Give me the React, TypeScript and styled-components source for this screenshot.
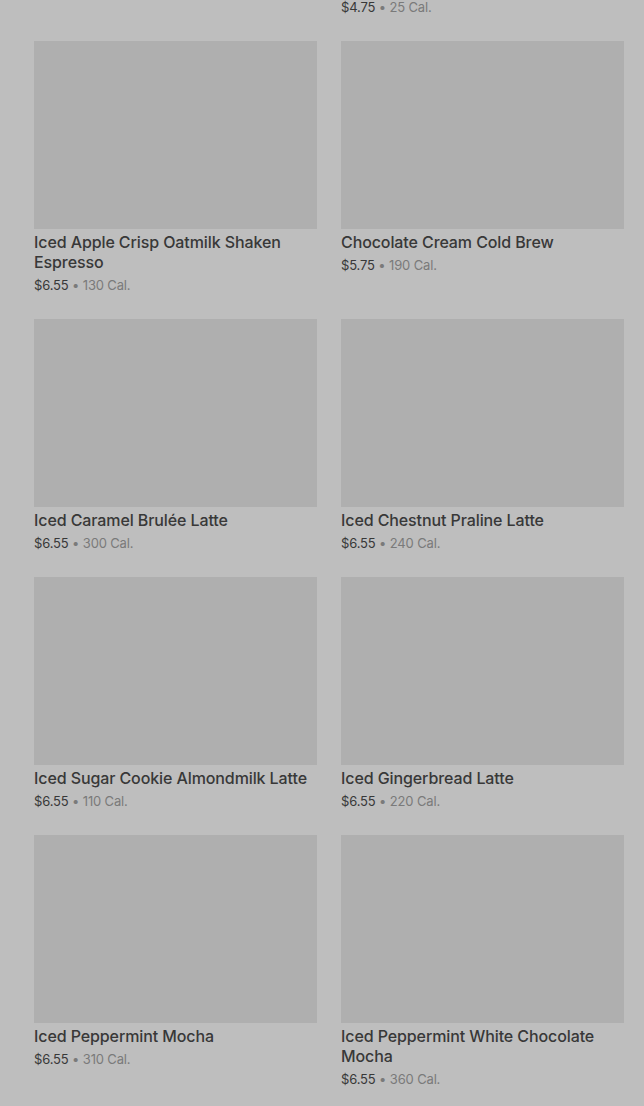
import React from "react";
import styled, { createGlobalStyle } from "styled-components";

const GlobalStyle = createGlobalStyle`
  html, body {
    margin: 0;
    padding: 0;
    background: #bebebe;
    overflow: hidden;
  }
  body {
    font-family: Inter, "Noto Sans", "Liberation Sans", sans-serif;
  }
`;

const Page = styled.div`
  width: 644px;
  height: 1106px;
  overflow: hidden;
  background: #bebebe;
`;

const Grid = styled.div`
  display: grid;
  grid-template-columns: 283px 283px;
  column-gap: 24px;
  row-gap: 25px;
  align-items: start;
  padding: 0 20px 0 34px;
  margin-top: -237px;
`;

const Card = styled.div`
  display: flex;
  flex-direction: column;
`;

const Thumb = styled.div`
  height: 188px;
  background: #afafaf;
`;

const Title = styled.div`
  margin-top: 3px;
  font-size: 16px;
  line-height: 20px;
  font-weight: 500;
  color: #383838;
  letter-spacing: -0.1px;
`;

const Meta = styled.div`
  margin-top: 4px;
  font-size: 13px;
  line-height: 18px;
  color: #7a7a7a;
  letter-spacing: -0.15px;
`;

const Price = styled.span`
  color: #383838;
`;

type Item = { name: string; price: string; cal: string };

const items: Item[] = [
  { name: "Iced Pumpkin Cream Chai", price: "$6.55", cal: "250 Cal." },
  { name: "Salted Caramel Cream Nitro Cold Brew Tall", price: "$4.75", cal: "25 Cal." },
  { name: "Iced Apple Crisp Oatmilk Shaken Espresso", price: "$6.55", cal: "130 Cal." },
  { name: "Chocolate Cream Cold Brew", price: "$5.75", cal: "190 Cal." },
  { name: "Iced Caramel Brulée Latte", price: "$6.55", cal: "300 Cal." },
  { name: "Iced Chestnut Praline Latte", price: "$6.55", cal: "240 Cal." },
  { name: "Iced Sugar Cookie Almondmilk Latte", price: "$6.55", cal: "110 Cal." },
  { name: "Iced Gingerbread Latte", price: "$6.55", cal: "220 Cal." },
  { name: "Iced Peppermint Mocha", price: "$6.55", cal: "310 Cal." },
  { name: "Iced Peppermint White Chocolate Mocha", price: "$6.55", cal: "360 Cal." },
];

export default function App() {
  return (
    <Page>
      <GlobalStyle />
      <Grid>
        {items.map((it) => (
          <Card key={it.name}>
            <Thumb />
            <Title>{it.name}</Title>
            <Meta>
              <Price>{it.price}</Price> • {it.cal}
            </Meta>
          </Card>
        ))}
      </Grid>
    </Page>
  );
}
